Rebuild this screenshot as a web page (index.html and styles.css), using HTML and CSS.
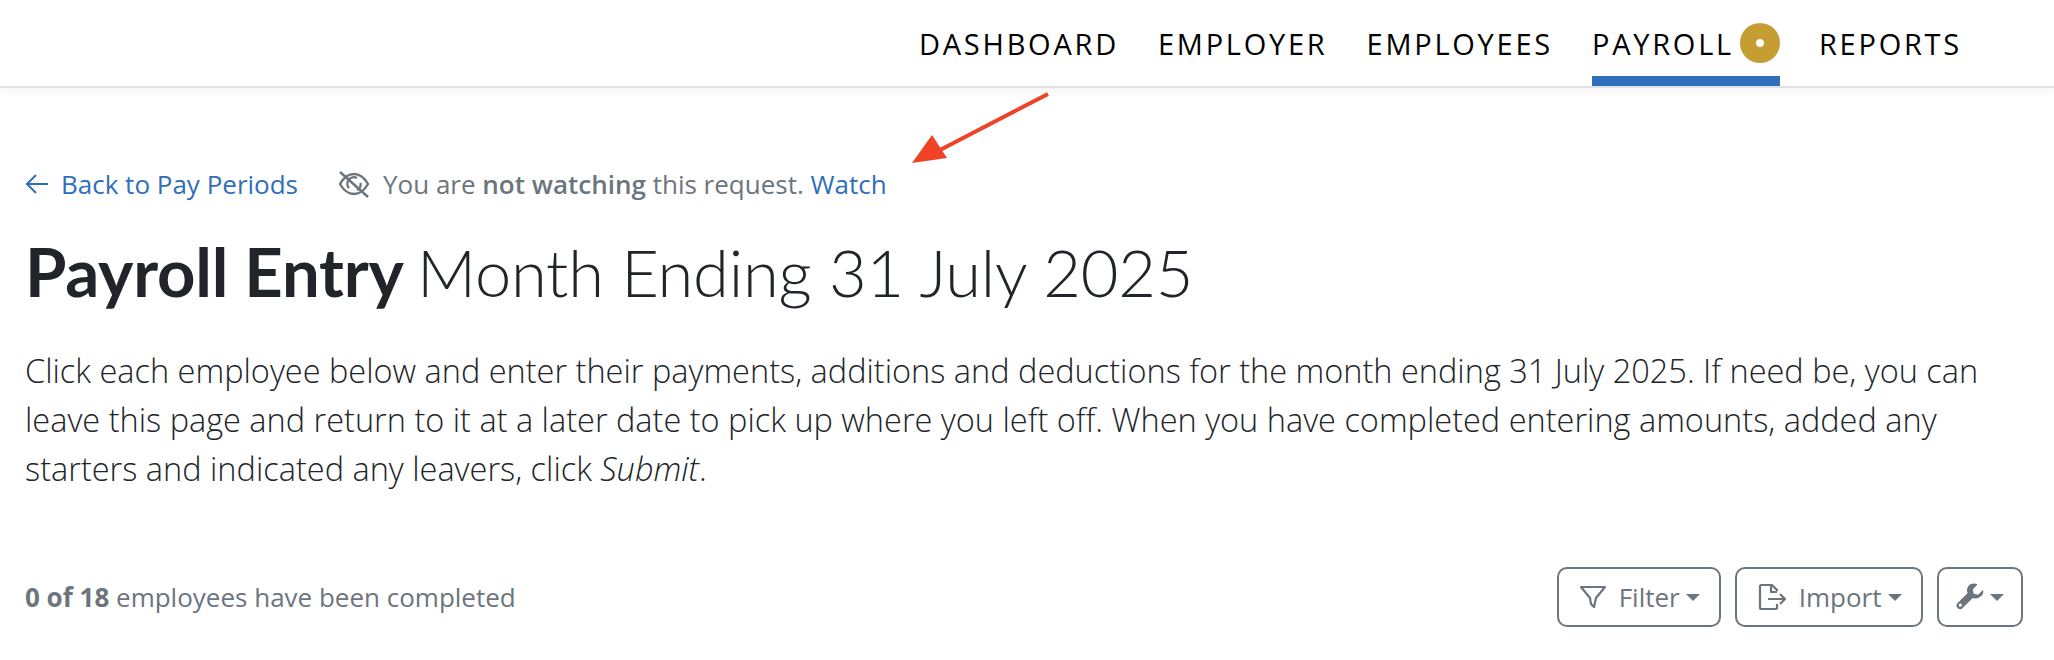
FILE: index.html
```html
<!DOCTYPE html>
<html lang="en">
<head>
    <meta charset="UTF-8">
    <title>Payroll Entry</title>
    <link rel="stylesheet" href="styles.css">
</head>
<body>
    <header class="topbar">
        <nav class="mainnav">
            <a href="#">DASHBOARD</a>
            <a href="#">EMPLOYER</a>
            <a href="#">EMPLOYEES</a>
            <a href="#" class="active">PAYROLL <span class="dot"></span></a>
            <a href="#">REPORTS</a>
        </nav>
    </header>

    <svg class="annotation" width="140" height="90" viewBox="0 0 140 90">
        <line x1="138" y1="6" x2="30" y2="62" stroke="#ee4327" stroke-width="4"/>
        <polygon points="2,75 22,47 37,70" fill="#ee4327"/>
    </svg>

    <main class="content">
        <div class="subnav">
            <a href="#" class="back">
                <svg width="24" height="24" viewBox="0 0 24 24" fill="none" stroke="currentColor" stroke-width="2"><path d="M23 12H2M11 3l-9 9 9 9"/></svg>
                Back to Pay Periods
            </a>
            <span class="watch">
                <svg width="34" height="28" viewBox="0 0 34 28" fill="none" stroke="currentColor" stroke-width="2.4"><path d="M3 14C7 7 11 4 17 4s10 3 14 10c-4 7-8 10-14 10S7 21 3 14z"/><path d="M12 18a6.500 6.500 0 0 1 8-10"/><path d="M23.500 13a6.500 6.500 0 0 1-3.500 7"/><path d="M3 2l28 25"/></svg>
                <span>You are <b>not watching</b> this request. <a href="#">Watch</a></span>
            </span>
        </div>

        <h1><strong>Payroll Entry</strong> Month Ending 31 July 2025</h1>

        <p class="intro">Click each employee below and enter their payments, additions and deductions for the month ending 31 July 2025. If need be, you can leave this page and return to it at a later date to pick up where you left off. When you have completed entering amounts, added any starters and indicated any leavers, click <em>Submit</em>.</p>

        <div class="toolbar">
            <div class="progress"><b>0 of 18</b> employees have been completed</div>
            <div class="actions">
                <button class="btn">
                    <svg width="28" height="26" viewBox="0 0 28 26" fill="none" stroke="currentColor" stroke-width="2.2" stroke-linejoin="round"><path d="M2 3h24l-9 11-2 9-3-3-1-6z"/></svg>
                    Filter <i class="caret"></i>
                </button>
                <button class="btn">
                    <svg width="30" height="28" viewBox="0 0 30 28" fill="none" stroke="currentColor" stroke-width="2.2" stroke-linejoin="round"><path d="M20 8V7l-5-5H4a1.500 1.500 0 0 0-1 1v22a1 1 0 0 0 1 1h15a1 1 0 0 0 1-1v-4"/><path d="M14 2v7h6"/><path d="M11 16h17M23 11l5 5-5 5"/></svg>
                    Import <i class="caret"></i>
                </button>
                <button class="btn btn-icon">
                    <svg width="28" height="28" viewBox="0 0 26 26" fill="currentColor"><path d="M25 6.500l-4.500 4.500-4-1-1-4L20 1.500C17-.5 12.500.5 11 3.500 10 5.500 10 7.500 10.800 9.300L1.500 18.600a3.300 3.300 0 0 0 4.700 4.700l9.300-9.300c2 .8 4.200.6 6-.5 3-1.700 4.500-4.500 3.500-7zM4 22a1.500 1.500 0 1 1 0-3 1.500 1.500 0 0 1 0 3z"/></svg>
                    <i class="caret"></i>
                </button>
            </div>
        </div>
    </main>
</body>
</html>
```

FILE: styles.css
```css
html, body {
    margin: 0;
    padding: 0;
}
body {
    font-family: "Open Sans", sans-serif;
    font-size: 26px;
    color: #212529;
    background-color: #fff;
    position: relative;
    height: 660px;
    overflow: hidden;
}
a {
    color: #2f6fbb;
    text-decoration: none;
}
.topbar {
    height: 86px;
    border-bottom: 2px solid #dee2e6;
    box-shadow: 0 4px 8px rgba(0,0,0,0.04);
    display: flex;
    justify-content: flex-end;
    padding-right: 92px;
}
.mainnav {
    display: flex;
    gap: 39px;
}
.mainnav a {
    color: #000;
    font-size: 29px;
    letter-spacing: 2.75px;
    height: 86px;
    padding: 10px 0;
    box-sizing: border-box;
    display: flex;
    align-items: center;
    gap: 6px;
}
.mainnav a.active {
    padding-bottom: 0;
    border-bottom: 10px solid #2f6fbb;
}
.dot {
    width: 40px;
    height: 40px;
    border-radius: 50%;
    background: radial-gradient(circle, #fff 0 3.500px, #c69d33 4.500px);
}
.annotation {
    position: absolute;
    left: 910px;
    top: 88px;
}
.content {
    padding: 0 25px;
}
.subnav {
    display: flex;
    align-items: center;
    gap: 39px;
    margin-top: 71px;
    height: 50px;
}
.back {
    display: flex;
    align-items: center;
    gap: 12px;
}
.watch {
    display: flex;
    align-items: center;
    gap: 12px;
    color: #6c757d;
}
.watch b {
    font-weight: 600;
}
h1 {
    font-family: Lato, sans-serif;
    font-weight: 300;
    font-size: 65px;
    letter-spacing: -0.2px;
    line-height: 80px;
    margin: 22px 0 0;
    color: #212529;
}
h1 strong {
    font-weight: 700;
    font-size: 67px;
    margin-right: -4px;
}
.intro {
    font-size: 32.500px;
    font-weight: 300;
    line-height: 49px;
    margin: 34px 0 0;
}
.toolbar {
    display: flex;
    justify-content: space-between;
    align-items: center;
    margin-top: 74px;
}
.progress {
    color: #6c757d;
}
.actions {
    display: flex;
    gap: 14px;
    margin-right: 6px;
}
.btn {
    font-family: "Open Sans", sans-serif;
    font-size: 26px;
    color: #6c757d;
    background: #fff;
    border: 2px solid #6c757d;
    border-radius: 10px;
    height: 60px;
    padding: 0 19.500px;
    display: flex;
    align-items: center;
    gap: 12px;
}
.btn-icon {
    padding: 0 17px;
}
.caret {
    width: 0;
    height: 0;
    border-left: 7px solid transparent;
    border-right: 7px solid transparent;
    border-top: 7px solid currentColor;
    margin-left: -6px;
}
```
